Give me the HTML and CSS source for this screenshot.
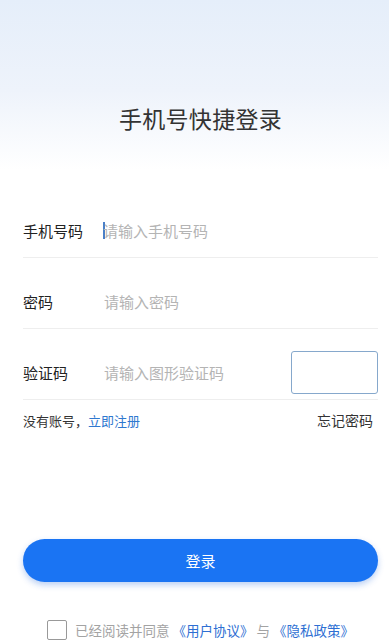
FILE: index.html
```html
<!DOCTYPE html>
<html lang="zh-CN">
<head>
<meta charset="utf-8">
<title>手机号快捷登录</title>
<link rel="stylesheet" href="styles.css">
</head>
<body>
<div class="page">
  <h1 class="title">手机号快捷登录</h1>
  <form class="form">
    <div class="row">
      <label class="label">手机号码</label>
      <div class="field">
        <span class="caret"></span>
        <input class="input" type="tel" placeholder="请输入手机号码">
      </div>
    </div>
    <div class="row">
      <label class="label">密码</label>
      <div class="field">
        <input class="input" type="password" placeholder="请输入密码">
      </div>
    </div>
    <div class="row">
      <label class="label">验证码</label>
      <div class="field">
        <input class="input" type="text" placeholder="请输入图形验证码">
      </div>
      <div class="captcha"></div>
    </div>
  </form>
  <div class="links">
    <span class="reg">没有账号，<a class="link">立即注册</a></span>
    <a class="forgot">忘记密码</a>
  </div>
  <button class="btn" type="button">登录</button>
  <div class="agree">
    <span class="check"></span>
    <span class="agree-text">已经阅读并同意 <a class="link2">《用户协议》</a> 与 <a class="link2">《隐私政策》</a></span>
  </div>
</div>
</body>
</html>
```

FILE: styles.css
```css
* { box-sizing: border-box; }
html, body { margin: 0; padding: 0; }
body {
  font-family: "Noto Sans CJK SC", "Noto Sans", sans-serif;
  background: #fff;
  color: #333;
}
.page {
  width: 389px;
  min-height: 644px;
  padding: 0 11px 0 23px;
  background: linear-gradient(to bottom, #e5eefa 0px, #eef3fb 90px, #ffffff 170px, #ffffff 100%);
}
.title {
  margin: 0;
  padding-top: 102px;
  font-size: 23px;
  line-height: 32px;
  font-weight: 400;
  color: #333;
  text-align: center;
  letter-spacing: 0.3px;
}
.form {
  margin-top: 53px;
}
.row {
  display: flex;
  align-items: center;
  padding: 22px 0 5px;
  border-bottom: 1px solid #eeeeee;
}
.row > * { height: 43px; }
.label {
  width: 82px;
  flex: none;
  font-size: 15px;
  font-weight: 400;
  color: #222;
  display: flex;
  align-items: center;
}
.field {
  flex: 1;
  display: flex;
  align-items: center;
  min-width: 0;
}
.caret {
  width: 2px;
  height: 17px;
  background: #4a7fc8;
  margin-left: -2px;
  margin-right: -1px;
  flex: none;
}
.input {
  flex: 1;
  min-width: 0;
  border: 0;
  outline: 0;
  background: transparent;
  padding: 0;
  margin-left: -1px;
  font-family: inherit;
  font-size: 15px;
  color: #333;
}
.input::placeholder { color: #b4b4b4; }
.captcha {
  width: 87px;
  flex: none;
  border: 1.5px solid #86a8cc;
  border-radius: 3px;
  background: #fff;
}
.links {
  display: flex;
  justify-content: space-between;
  align-items: center;
  margin-top: 10px;
  height: 20px;
  padding-right: 5px;
}
.reg {
  font-size: 13px;
  color: #333;
}
.link { color: #2f78cf; }
.forgot {
  font-size: 14px;
  color: #333;
}
.btn {
  display: block;
  width: 100%;
  height: 43px;
  margin-top: 109px;
  border: 0;
  border-radius: 22px;
  background: #1a74f3;
  color: #fff;
  font-family: inherit;
  font-size: 15px;
  box-shadow: 0 3px 6px rgba(26, 100, 220, 0.3);
}
.agree {
  display: flex;
  justify-content: center;
  align-items: center;
  margin-top: 38px;
  height: 20px;
}
.check {
  width: 20px;
  height: 20px;
  border: 1.5px solid #999;
  border-radius: 2px;
  margin-right: 8px;
  flex: none;
}
.agree-text {
  font-size: 13.5px;
  color: #a3a3a3;
  white-space: nowrap;
}
.link2 { color: #2e6fd3; }
```
